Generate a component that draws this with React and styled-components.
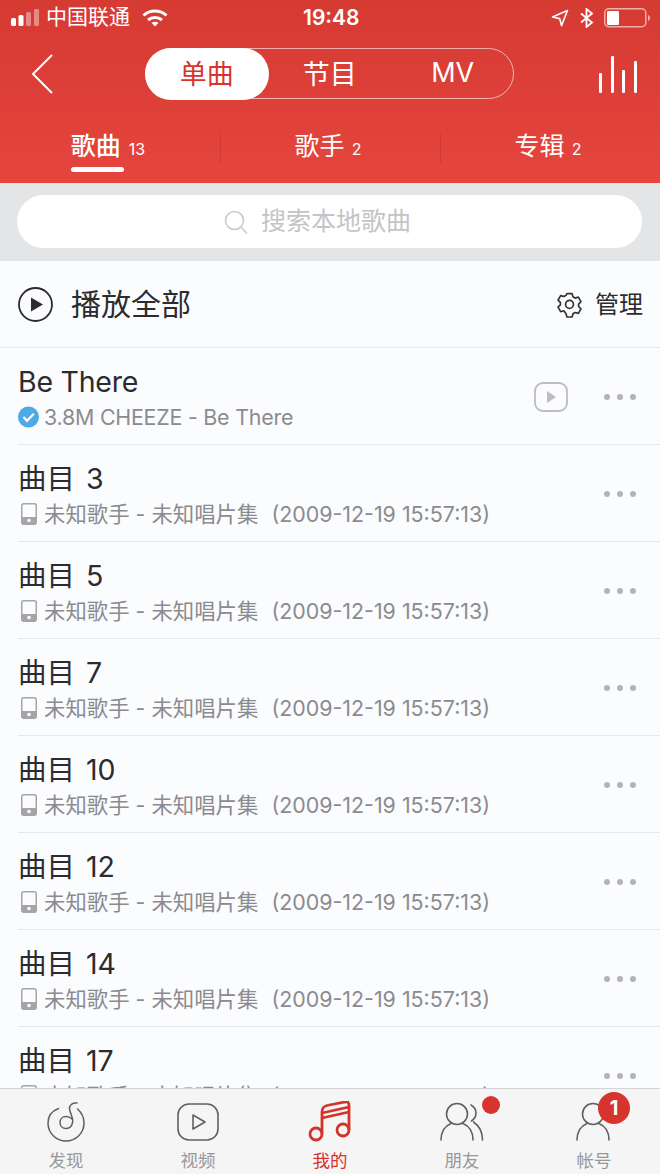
import React from 'react'
import styled, { createGlobalStyle } from 'styled-components'

const GlobalStyle = createGlobalStyle`
  html, body { margin: 0; padding: 0; background: #fbfcfe; }
  * { box-sizing: border-box; }
  body { font-family: Inter, "Noto Sans CJK SC", sans-serif; }
`

const Page = styled.div`
  width: 660px;
  height: 1174px;
  display: flex;
  flex-direction: column;
  overflow: hidden;
  background: #fbfcfe;
`
const Header = styled.header`
  height: 183px;
  flex: none;
  color: #fff;
  background: linear-gradient(180deg, #d53a33 0%, #e5453d 100%);
`
const StatusBar = styled.div`
  height: 36px;
  padding: 0 10px;
  display: flex;
  align-items: center;
  position: relative;
`
const Carrier = styled.span`
  font-size: 21px;
  line-height: 26px;
  margin-left: 6px;
  margin-right: 12px;
  margin-top: -3px;
`
const Clock = styled.span`
  position: absolute;
  left: 303px;
  top: 5px;
  font-size: 21px;
  line-height: 26px;
  font-weight: 600;
`
const StatusRight = styled.div`
  margin-left: auto;
  display: flex;
  align-items: center;
`
const NavRow = styled.div`
  height: 64px;
  margin-top: 12px;
  padding: 0 23px 0 31px;
  display: flex;
  align-items: flex-start;
`
const Segment = styled.div`
  width: 369px;
  height: 51px;
  margin-left: 92px;
  margin-right: 85px;
  display: grid;
  grid-template-columns: repeat(3, 123px);
  border: 1.5px solid rgba(255, 255, 255, 0.6);
  border-radius: 26px;
  flex: none;
`
const SegmentItem = styled.div`
  margin: -1.5px 0 -1.5px -1.5px;
  padding-bottom: 2px;
  display: flex;
  align-items: center;
  justify-content: center;
  font-size: 27px;
  border-radius: 26px;
  color: ${p => (p.$active ? '#d8342e' : '#fff')};
  background: ${p => (p.$active ? '#fff' : 'transparent')};
`
const Tabs = styled.div`
  height: 62px;
  margin-top: 9px;
  display: grid;
  grid-template-columns: repeat(3, 1fr);
`
const Tab = styled.div`
  display: flex;
  justify-content: center;
  padding: 6px 4px 0 0;
  position: relative;
  &::before {
    content: '';
    display: ${p => (p.$divider ? 'block' : 'none')};
    position: absolute;
    left: 0;
    top: 13px;
    width: 1px;
    height: 29px;
    background: rgba(170, 40, 35, 0.35);
  }
`
const TabInner = styled.div`
  display: flex;
  flex-direction: column;
  align-items: flex-start;
`
const TabText = styled.div`
  height: 38px;
  display: flex;
  align-items: center;
  white-space: nowrap;
`
const TabLabel = styled.span`
  font-size: 25px;
  margin-top: -4px;
  font-weight: ${p => (p.$active ? 500 : 400)};
`
const TabCount = styled.span`
  font-size: 16px;
  margin-left: ${p => (p.$wide ? 8 : 7)}px;
  margin-top: 6px;
`
const Indicator = styled.div`
  width: 53px;
  height: 5px;
  margin-top: 2px;
  border-radius: 3px;
  background: #fff;
`
const SearchBand = styled.div`
  height: 78px;
  flex: none;
  padding: 12px 18px 13px 17px;
  background: #e4e5e7;
`
const SearchPill = styled.div`
  height: 53px;
  border-radius: 27px;
  background: #fff;
  display: flex;
  align-items: center;
  justify-content: center;
  gap: 13px;
  padding-right: 24px;
  color: #c4c4c6;
  font-size: 25px;
  line-height: 34px;
`
const SearchText = styled.span`
  margin-top: -2px;
`
const PlayAll = styled.div`
  height: 87px;
  flex: none;
  padding: 0 17px 0 18px;
  display: flex;
  align-items: center;
  border-bottom: 1px solid #e6e7e9;
  color: #2c2c2e;
`
const PlayAllLabel = styled.span`
  font-size: 30px;
  line-height: 40px;
  margin-left: 18px;
  margin-top: -1px;
`
const Manage = styled.div`
  margin-left: auto;
  display: flex;
  align-items: center;
  gap: 12px;
  font-size: 24px;
  line-height: 32px;
`
const ManageText = styled.span`
  margin-top: 2px;
`
const List = styled.div`
  flex: 1;
  min-height: 0;
  overflow: hidden;
  padding-left: 18px;
`
const Row = styled.div`
  height: 97px;
  display: flex;
  align-items: center;
  padding-right: 24px;
  border-bottom: 1px solid #e6e7e9;
`
const RowBody = styled.div`
  flex: 1;
  min-width: 0;
  padding-top: 6px;
`
const Title = styled.div`
  font-size: 28.5px;
  line-height: 36px;
  color: #2c2c2e;
  white-space: nowrap;
  letter-spacing: ${p => (p.$latin ? '-0.25px' : '0')};
`
const TrackNo = styled.span`
  margin-left: 11px;
`
const Sub = styled.div`
  display: flex;
  align-items: center;
  height: 34px;
  font-size: 21.4px;
  color: #8b8b8f;
  white-space: nowrap;
  letter-spacing: ${p => (p.$latin ? '-0.22px' : '0')};
`
const SubCjk = styled.span`
  margin-top: -3px;
`
const Stamp = styled.span`
  margin-left: 13px;
`
const SubIcon = styled.span`
  width: 26px;
  flex: none;
  display: flex;
  align-items: center;
`
const RowVideo = styled.svg`
  margin-right: 36px;
  margin-top: 1px;
  flex: none;
`
const Dots = styled.div`
  display: flex;
  gap: 7px;
  flex: none;
  margin-top: 2px;
`
const Dot = styled.i`
  width: 6px;
  height: 6px;
  border-radius: 50%;
  background: #b4b4b8;
`
const TabBar = styled.nav`
  height: 86px;
  flex: none;
  display: grid;
  grid-template-columns: repeat(5, 1fr);
  background: #f5f5f5;
  border-top: 1px solid #d4d4d6;
`
const BarItem = styled.div`
  display: flex;
  flex-direction: column;
  align-items: center;
  padding-top: 11px;
  position: relative;
  color: ${p => (p.$active ? '#d5322c' : '#98989b')};
`
const BarIconBox = styled.div`
  height: 44px;
  display: flex;
  align-items: center;
`
const BarLabel = styled.span`
  font-size: 17.5px;
  line-height: 26px;
  margin-top: 4px;
`
const RedDot = styled.span`
  position: absolute;
  left: 86px;
  top: 7px;
  width: 18px;
  height: 18px;
  border-radius: 50%;
  background: #d8342e;
`
const Badge = styled.span`
  position: absolute;
  left: 70px;
  top: 3px;
  width: 32px;
  height: 32px;
  border-radius: 50%;
  background: #d8342e;
  color: #fff;
  font-size: 20px;
  font-weight: 700;
  display: flex;
  align-items: center;
  justify-content: center;
`

const Signal = () => (
  <svg width="30" height="22" viewBox="0 0 30 22">
    <rect x="1" y="11" width="5" height="8" rx="1.5" fill="#fff" />
    <rect x="8.5" y="8" width="5" height="11" rx="1.5" fill="#fff" />
    <rect x="16" y="5" width="5" height="14" rx="1.5" fill="#fff" opacity=".4" />
    <rect x="24" y="2" width="5" height="17" rx="1.5" fill="#fff" opacity=".4" />
  </svg>
)
const Wifi = () => (
  <svg width="26" height="20" viewBox="0 0 26 20" fill="none" stroke="#fff" strokeWidth="3">
    <path d="M1.5 7.500C8 1.500 18 1.500 24.500 7.500" />
    <path d="M6 12c4-3.500 10-3.500 14 0" />
    <path d="M13 18.500l-3.500-3.800c2-1.400 5-1.400 7 0z" fill="#fff" stroke="none" />
  </svg>
)
const Location = () => (
  <svg width="18" height="18" viewBox="0 0 18 18" fill="none" stroke="#fff" strokeWidth="1.6" strokeLinejoin="round">
    <path d="M16.500 1.500L1.500 8l7.200 1.600 1.800 7z" />
  </svg>
)
const Bluetooth = () => (
  <svg width="14" height="20" viewBox="0 0 14 20" fill="none" stroke="#fff" strokeWidth="1.8" style={{ margin: '0 10px 0 11px' }}>
    <path d="M1 5.500l11 9-5.500 4.500V1l5.500 4.500-11 9" />
  </svg>
)
const Battery = () => (
  <svg width="46" height="20" viewBox="0 0 46 20">
    <rect x=".75" y=".75" width="41" height="18" rx="4" fill="none" stroke="#fff" strokeOpacity=".6" strokeWidth="1.5" />
    <rect x="3" y="3" width="12" height="14" rx="1" fill="#fff" />
    <path d="M44 7c1.300.5 2 1.600 2 3s-.7 2.500-2 3z" fill="#fff" fillOpacity=".6" />
  </svg>
)
const Back = () => (
  <svg width="22" height="40" viewBox="0 0 22 40" fill="none" stroke="#fff" strokeWidth="2" style={{ marginTop: 6, flex: 'none' }}>
    <path d="M21 1L2 20l19 19" />
  </svg>
)
const Bars = () => (
  <svg width="38" height="40" viewBox="0 0 38 40" fill="#fff" style={{ marginTop: 7, flex: 'none' }}>
    <rect x="0" y="18" width="3" height="20" rx="1" />
    <rect x="12" y="1" width="3" height="37" rx="1" />
    <rect x="23" y="15" width="3" height="23" rx="1" />
    <rect x="35" y="6" width="3" height="32" rx="1" />
  </svg>
)
const SearchIcon = () => (
  <svg width="24" height="24" viewBox="0 0 24 24" fill="none" stroke="#c9c9cb" strokeWidth="1.5">
    <circle cx="10.500" cy="10.500" r="9" />
    <path d="M17 17l6 6.500" />
  </svg>
)
const PlayCircle = () => (
  <svg width="35" height="35" viewBox="0 0 35 35">
    <circle cx="17.500" cy="17.500" r="16.500" fill="none" stroke="#2c2c2e" strokeWidth="1.8" />
    <path d="M13 10.500l12 7-12 7z" fill="#2c2c2e" />
  </svg>
)
const Gear = () => (
  <svg width="27" height="27" viewBox="0 0 24 24" fill="none" stroke="#333" strokeWidth="1.500" strokeLinejoin="round">
    <path d="M9.700 2.300h4.600l.8 2.900 1.900 1.100 2.900-.8 2.300 4-2.100 2.100v2.200l2.100 2.100-2.300 4-2.900-.8-1.900 1.100-.8 2.900H9.700l-.8-2.900L7 17.600l-2.900.8-2.300-4 2.100-2.100v-2.200L1.800 8.100l2.300-4 2.900.8 1.900-1.100z" />
    <circle cx="12" cy="11.900" r="3.500" />
  </svg>
)
const Verified = () => (
  <svg width="22" height="22" viewBox="0 0 22 22">
    <circle cx="10.500" cy="11" r="10.500" fill="#4fa9e8" />
    <path d="M5.500 11l3.500 3.800 6.800-7" fill="none" stroke="#fff" strokeWidth="2.200" />
  </svg>
)
const Device = () => (
  <svg width="16" height="22" viewBox="0 0 16 22" style={{ marginLeft: 3 }}>
    <rect x=".75" y=".75" width="14.500" height="20.500" rx="2" fill="none" stroke="#a5a5a8" strokeWidth="1.500" />
    <path d="M1 14h14v5.500a2 2 0 0 1-2 2H3a2 2 0 0 1-2-2z" fill="#a5a5a8" />
    <circle cx="8" cy="17.500" r="1.800" fill="#fbfcfe" />
  </svg>
)
const VideoSmall = () => (
  <RowVideo width="34" height="30" viewBox="0 0 34 30">
    <rect x="1" y="1" width="32" height="28" rx="8" fill="none" stroke="#bdbdc0" strokeWidth="1.800" />
    <path d="M13 9l9 6-9 6z" fill="#bdbdc0" />
  </RowVideo>
)
const Discover = () => (
  <svg width="38" height="40" viewBox="0 0 38 40" fill="none" stroke="#606062" strokeWidth="1.500" strokeLinecap="round">
    <path d="M11.500 6.500C5 9 1 14.500 1 21c0 10 8 18 18 18s18-8 18-18c0-5.500-2.500-10.500-6.500-14" />
    <path d="M30 1c-4-.5-7.500 1.500-7.500 5.500 0 2 1.500 5.500 2.500 8.500 2 5.500-.5 11.500-6 11.500-3.500 0-6-2.500-6-6 0-3.500 2.500-6 6-6 2.500 0 4.500 1 6 2.500" />
  </svg>
)
const Video = () => (
  <svg width="42" height="38" viewBox="0 0 42 38" fill="none" stroke="#606062" strokeWidth="1.600" strokeLinejoin="round">
    <rect x="1" y="1" width="40" height="36" rx="11" />
    <path d="M16 12l12 7-12 7z" />
  </svg>
)
const Music = () => (
  <svg width="44" height="42" viewBox="0 0 44 42" fill="none" stroke="#d5322c" strokeWidth="2.800">
    <circle cx="8" cy="33" r="6" />
    <circle cx="35" cy="29" r="6" />
    <path d="M14 33V11c0-4 1.500-5.500 5-6.500l18-3.500c3-.5 4 .5 4 3.500V29" />
    <path d="M14 17l27-6" />
    <path d="M14 12l27-6" />
  </svg>
)
const Friends = () => (
  <svg width="44" height="40" viewBox="0 0 44 40" fill="none" stroke="#606062" strokeWidth="1.600" strokeLinecap="round">
    <circle cx="17" cy="12" r="10.500" />
    <path d="M1 38c0-9 4-14 10-16.500" />
    <path d="M33 38c0-9-4-14-10-16.500" />
    <path d="M31 3c3.500 2 5 5 5 8s-1.500 6-4.500 8" />
    <path d="M42.500 38c0-8-3-14-9-18" />
  </svg>
)
const Account = () => (
  <svg width="36" height="40" viewBox="0 0 36 40" fill="none" stroke="#606062" strokeWidth="1.600" strokeLinecap="round">
    <circle cx="17" cy="12" r="10.500" />
    <path d="M1 38c0-9 4-14 10-16.500" />
    <path d="M33 38c0-9-4-14-10-16.500" />
  </svg>
)

const tracks = [3, 5, 7, 10, 12, 14, 17]

export default function App() {
  return (
    <Page>
      <GlobalStyle />
      <Header>
        <StatusBar>
          <Signal />
          <Carrier>中国联通</Carrier>
          <Wifi />
          <Clock>19:48</Clock>
          <StatusRight>
            <Location />
            <Bluetooth />
            <Battery />
          </StatusRight>
        </StatusBar>
        <NavRow>
          <Back />
          <Segment>
            <SegmentItem $active>单曲</SegmentItem>
            <SegmentItem>节目</SegmentItem>
            <SegmentItem>MV</SegmentItem>
          </Segment>
          <Bars />
        </NavRow>
        <Tabs>
          <Tab>
            <TabInner>
              <TabText>
                <TabLabel $active>歌曲</TabLabel>
                <TabCount $wide>13</TabCount>
              </TabText>
              <Indicator />
            </TabInner>
          </Tab>
          <Tab $divider>
            <TabInner>
              <TabText>
                <TabLabel>歌手</TabLabel>
                <TabCount>2</TabCount>
              </TabText>
            </TabInner>
          </Tab>
          <Tab $divider>
            <TabInner>
              <TabText>
                <TabLabel>专辑</TabLabel>
                <TabCount>2</TabCount>
              </TabText>
            </TabInner>
          </Tab>
        </Tabs>
      </Header>
      <SearchBand>
        <SearchPill>
          <SearchIcon />
          <SearchText>搜索本地歌曲</SearchText>
        </SearchPill>
      </SearchBand>
      <PlayAll>
        <PlayCircle />
        <PlayAllLabel>播放全部</PlayAllLabel>
        <Manage>
          <Gear />
          <ManageText>管理</ManageText>
        </Manage>
      </PlayAll>
      <List>
        <Row>
          <RowBody>
            <Title $latin>Be There</Title>
            <Sub $latin>
              <SubIcon><Verified /></SubIcon>
              3.8M CHEEZE - Be There
            </Sub>
          </RowBody>
          <VideoSmall />
          <Dots><Dot /><Dot /><Dot /></Dots>
        </Row>
        {tracks.map(n => (
          <Row key={n}>
            <RowBody>
              <Title>曲目<TrackNo>{n}</TrackNo></Title>
              <Sub>
                <SubIcon><Device /></SubIcon>
                <SubCjk>未知歌手 - 未知唱片集</SubCjk>
                <Stamp>(2009-12-19 15:57:13)</Stamp>
              </Sub>
            </RowBody>
            <Dots><Dot /><Dot /><Dot /></Dots>
          </Row>
        ))}
      </List>
      <TabBar>
        <BarItem>
          <BarIconBox><Discover /></BarIconBox>
          <BarLabel>发现</BarLabel>
        </BarItem>
        <BarItem>
          <BarIconBox><Video /></BarIconBox>
          <BarLabel>视频</BarLabel>
        </BarItem>
        <BarItem $active>
          <BarIconBox><Music /></BarIconBox>
          <BarLabel>我的</BarLabel>
        </BarItem>
        <BarItem>
          <BarIconBox><Friends /></BarIconBox>
          <BarLabel>朋友</BarLabel>
          <RedDot />
        </BarItem>
        <BarItem>
          <BarIconBox><Account /></BarIconBox>
          <BarLabel>帐号</BarLabel>
          <Badge>1</Badge>
        </BarItem>
      </TabBar>
    </Page>
  )
}
